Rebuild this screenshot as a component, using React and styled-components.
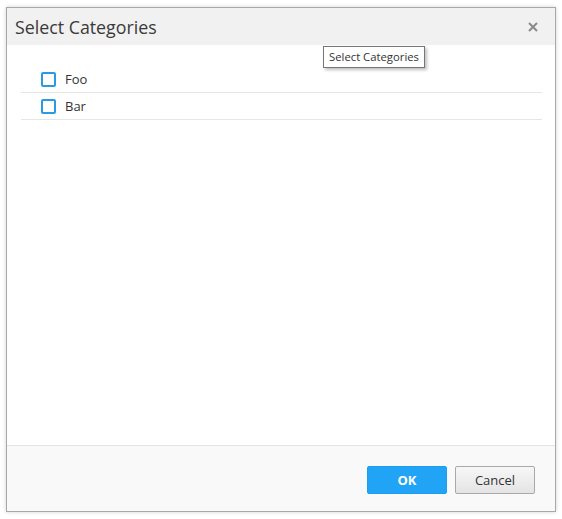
import React from 'react';
import styled, { createGlobalStyle } from 'styled-components';

const Global = createGlobalStyle`
  body {
    margin: 0;
    background: #ffffff;
    font-family: 'Open Sans', 'Liberation Sans', sans-serif;
  }
`;

const Stage = styled.div`
  position: relative;
  width: 562px;
  height: 519px;
  padding: 7px 6px;
  box-sizing: border-box;
  background: #fff;
`;

const Dialog = styled.div`
  width: 550px;
  height: 505px;
  box-sizing: border-box;
  border: 1px solid #a8a8a8;
  box-shadow: 0 0 4px rgba(0, 0, 0, 0.18);
  background: #fff;
  display: flex;
  flex-direction: column;
`;

const Header = styled.div`
  height: 37px;
  background: #f1f1f1;
  display: flex;
  align-items: center;
  justify-content: space-between;
  padding: 0 16px 0 8px;
  flex-shrink: 0;
`;

const Title = styled.h1`
  margin: 0;
  font-size: 17.8px;
  font-weight: 400;
  color: #3a3a3a;
`;

const Close = styled.button`
  border: none;
  background: none;
  padding: 0;
  width: 12px;
  height: 12px;
  display: flex;
  cursor: pointer;
`;

const Body = styled.div`
  flex: 1;
  padding: 21px 13px 0 14px;
`;

const Row = styled.label`
  display: flex;
  align-items: center;
  gap: 9px;
  height: 27px;
  padding-left: 20px;
  border-bottom: 1px solid #e6e6e6;
  box-sizing: border-box;
  font-size: 13px;
  color: #333;
  cursor: pointer;
`;

const Box = styled.span`
  width: 15px;
  height: 15px;
  box-sizing: border-box;
  border: 2px solid #2a9be3;
  border-radius: 2px;
  background: #fff;
`;

const Footer = styled.div`
  height: 66px;
  flex-shrink: 0;
  background: #f9f9f9;
  border-top: 1px solid #e4e4e4;
  display: flex;
  align-items: center;
  justify-content: flex-end;
  gap: 8px;
  padding-right: 20px;
  padding-top: 2px;
  box-sizing: border-box;
`;

const Button = styled.button`
  width: 80px;
  height: 28px;
  font-family: inherit;
  font-size: 13px;
  border-radius: 2px;
  cursor: pointer;
  border: 1px solid ${(p) => (p.primary ? '#1e9ef0' : '#a9a9a9')};
  background: ${(p) => (p.primary ? '#21a4f6' : 'linear-gradient(#f7f7f7, #e4e4e4)')};
  color: ${(p) => (p.primary ? '#fff' : '#333')};
  font-weight: ${(p) => (p.primary ? 700 : 400)};
`;

const Tooltip = styled.div`
  position: absolute;
  left: 323px;
  top: 46px;
  padding: 2px 5px 3px;
  font-size: 11.3px;
  color: #333;
  background: #fff;
  border: 1px solid #767676;
  box-shadow: 2px 2px 3px rgba(0, 0, 0, 0.25);
  white-space: nowrap;
`;

const categories = ['Foo', 'Bar'];

export default function App() {
  return (
    <Stage>
      <Global />
      <Dialog>
        <Header>
          <Title>Select Categories</Title>
          <Close aria-label="Close">
            <svg width="12" height="12" viewBox="0 0 12 12">
              <path d="M2 2 L10 10 M10 2 L2 10" stroke="#8a8a8a" strokeWidth="2" />
            </svg>
          </Close>
        </Header>
        <Body>
          {categories.map((c) => (
            <Row key={c}>
              <Box />
              {c}
            </Row>
          ))}
        </Body>
        <Footer>
          <Button primary>OK</Button>
          <Button>Cancel</Button>
        </Footer>
      </Dialog>
      <Tooltip>Select Categories</Tooltip>
    </Stage>
  );
}
